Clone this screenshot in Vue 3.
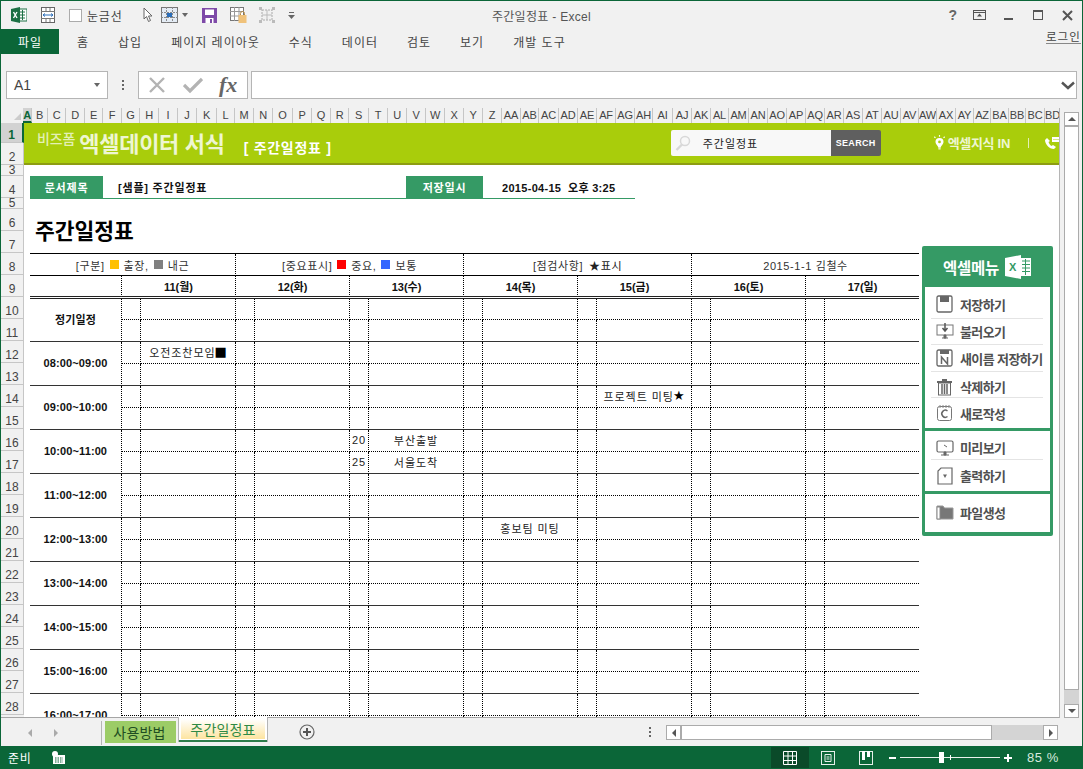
<script setup>
const edges = [23,32,48,66,85,103,122,140,159,178,197,217,235,254,273,293,312,331,349,369,388,407,426,445,464,483,502,521,539,559,578,597,616,635,653,673,692,711,729,749,768,787,806,825,844,863,882,901,919,937,956,974,991,1009,1026,1045,1060]
const letters = 'ABCDEFGHIJKLMNOPQRSTUVWXYZ'.split('')
const names = [...letters, ...letters.map(l => 'A' + l), 'BA', 'BB', 'BC', 'BD']
const cols = names.map((n, i) => ({ n, w: edges[i + 1] - edges[i] }))

const rows = [
  [1, 20], [2, 22], [3, 11], [4, 22], [5, 11], [6, 22], [7, 22], [8, 22], [9, 22], [10, 22],
  ...Array.from({ length: 18 }, (_, i) => [11 + i, 22])
].map(([n, h]) => ({ n, h }))

const tabs = ['홈', '삽입', '페이지 레이아웃', '수식', '데이터', '검토', '보기', '개발 도구']
const days = ['11(월)', '12(화)', '13(수)', '14(목)', '15(금)', '16(토)', '17(일)']
const times = ['정기일정', '08:00~09:00', '09:00~10:00', '10:00~11:00', '11:00~12:00', '12:00~13:00', '13:00~14:00', '14:00~15:00', '15:00~16:00', '16:00~17:00']

// key: block-half-column (column 0..13, even = narrow)
const events = {
  '1-0-1': { t: '오전조찬모임', m: '■' },
  '2-0-9': { t: '프로젝트 미팅', m: '★' },
  '3-0-4': { t: '20' },
  '3-0-5': { t: '부산출발' },
  '3-1-4': { t: '25' },
  '3-1-5': { t: '서울도착' },
  '5-0-7': { t: '홍보팀 미팅' }
}
const cells = Array.from({ length: 14 }, (_, i) => i)

const menu = [
  { pad: 5, items: [
    { t: '저장하기', i: 'save', h: 27, pb: 2 }, { t: '불러오기', i: 'load', h: 26, pb: 1 }, { t: '새이름 저장하기', i: 'saveas', h: 27 },
    { t: '삭제하기', i: 'trash', h: 26, pt: 4 }, { t: '새로작성', i: 'new', h: 30 }] },
  { pad: 5, items: [{ t: '미리보기', i: 'view', h: 24 }, { t: '출력하기', i: 'print', h: 31 }] },
  { pad: 0, items: [{ t: '파일생성', i: 'folder', h: 38, pb: 2 }] }
]
</script>

<template>
  <div class="win">
    <header class="titlebar">
      <div class="qat">
        <svg class="q-xl" width="16" height="16" viewBox="0 0 16 16"><rect x="7" y="2" width="9" height="12" fill="#fff" stroke="#1d7044"/><path d="M9 5h5M9 8h5M9 11h5M11.500 3v10" stroke="#1d7044"/><path d="M0 2l9-2v16l-9-2z" fill="#1d7044"/><path d="M2.500 5l3.500 6M6 5l-3.500 6" stroke="#fff" stroke-width="1.400"/></svg>
        <svg class="q-fz" width="16" height="16" viewBox="0 0 16 16"><rect x="1.500" y=".5" width="13" height="15" fill="#fff" stroke="#666"/><path d="M1 4.500h14M1 11.500h14M6 1v3M10 1v3M6 12v3M10 12v3" stroke="#777"/><path d="M3 8h10M3 8l2-1.500M3 8l2 1.500M13 8l-2-1.500M13 8l-2 1.500" stroke="#2a6ebb"/></svg>
        <span class="check"></span>
        <span class="q-label">눈금선</span>
        <svg class="q-cur" width="10" height="16" viewBox="0 0 10 16"><path d="M1 1v11l2.500-2.500 2 5 2-1-2-4.500H9z" fill="#fff" stroke="#666"/></svg>
        <svg class="q-grid" width="17" height="16" viewBox="0 0 17 16"><rect x=".5" y=".5" width="16" height="15" fill="#e4ecf5" stroke="#777"/><path d="M0 5.500h17M0 10.500h17M5.500 0v16M11.500 0v16" stroke="#8a8a8a" stroke-dasharray="2 1"/><rect x="6" y="6" width="5" height="4" fill="#2a6ebb"/></svg>
        <span class="tri q-tri"></span>
        <svg class="q-save" width="15" height="15" viewBox="0 0 15 15"><path d="M0 0h15v15H0z" fill="#7e4aa8"/><rect x="3" y="1.500" width="9" height="5.500" fill="#fff"/><rect x="3.500" y="10" width="8" height="5" fill="#fff"/><rect x="8" y="11" width="2" height="4" fill="#7e4aa8"/></svg>
        <svg class="q-lock" width="17" height="16" viewBox="0 0 17 16"><rect x=".5" y=".5" width="13" height="13" fill="#fff" stroke="#777"/><path d="M0 4.500h14M0 9h14M4.500 0v14M9 0v14" stroke="#999"/><rect x="8.500" y="8" width="8" height="8" fill="#f0c27a"/><path d="M10.500 8V6.500a2 2 0 0 1 4 0V8" fill="none" stroke="#b58a45"/></svg>
        <svg class="q-grp" width="16" height="16" viewBox="0 0 16 16"><rect x="3" y="3" width="10" height="10" fill="none" stroke="#aaa" stroke-dasharray="2 1"/><path d="M3 8h10M8 3v10" stroke="#bbb"/><path d="M0 0h3v3H0zM13 0h3v3h-3zM0 13h3v3H0zM13 13h3v3h-3z" fill="#bbb"/></svg>
        <svg class="q-more" width="7" height="7" viewBox="0 0 7 7"><path d="M1 .5h5" stroke="#666"/><path d="M0 3h7L3.500 7z" fill="#666"/></svg>
      </div>
      <div class="wintitle">주간일정표 - Excel</div>
      <div class="winbtns">
        <span class="help">?</span>
        <svg class="w-disp" width="13" height="10" viewBox="0 0 13 10"><rect x=".5" y=".5" width="12" height="9" fill="none" stroke="#555"/><path d="M.5 2.500h12" stroke="#555"/><path d="M6.500 3.500l-2.500 3h5z" fill="#555"/></svg>
        <span class="w-min"></span>
        <span class="w-max"></span>
        <svg class="w-close" width="11" height="11" viewBox="0 0 11 11"><path d="M1 1l9 9M10 1l-9 9" stroke="#555" stroke-width="2"/></svg>
      </div>
    </header>

    <nav class="ribbon">
      <div class="filetab">파일</div>
      <div class="tablist">
        <span v-for="t in tabs" :key="t">{{ t }}</span>
      </div>
      <div class="login">로그인</div>
    </nav>

    <div class="fbar">
      <div class="namebox"><span>A1</span><i class="tri"></i></div>
      <div class="dots"><i></i><i></i><i></i></div>
      <div class="fbtns">
        <svg width="18" height="18" viewBox="0 0 18 18"><path d="M2 2l14 14M16 2L2 16" stroke="#b3b3b3" stroke-width="2.400"/></svg>
        <svg width="20" height="18" viewBox="0 0 20 18"><path d="M1 9l6 6L19 3" fill="none" stroke="#b3b3b3" stroke-width="3.200"/></svg>
        <em>fx</em>
      </div>
      <div class="finput">
        <svg width="14" height="9" viewBox="0 0 14 9"><path d="M1 1.500l6 5.500 6-5.500" fill="none" stroke="#555" stroke-width="2.400"/></svg>
      </div>
    </div>

    <main class="grid-area">
      <div class="sheet">
        <div class="colhead">
          <div class="corner"><i></i></div>
          <div v-for="(c, i) in cols" :key="c.n" class="colh" :class="{ sel: i === 0 }" :style="{ width: c.w + 'px' }">{{ c.n }}</div>
        </div>
        <div class="sheetbody">
          <div class="rowhead">
            <div v-for="r in rows" :key="r.n" class="rowh" :class="{ sel: r.n === 1, short: r.h < 20 }" :style="{ height: r.h + 'px' }">{{ r.n }}</div>
          </div>
          <div class="canvas">
            <div class="banner">
              <span class="b-brand">비즈폼</span>
              <span class="b-name">엑셀데이터 서식</span>
              <span class="b-doc">[ 주간일정표 ]</span>
              <div class="b-right">
                <div class="search">
                  <svg width="16" height="16" viewBox="0 0 16 16"><circle cx="10" cy="6" r="4.500" fill="none" stroke="#d8d8d8" stroke-width="1.500"/><path d="M7 9.500L1.500 15" stroke="#d8d8d8" stroke-width="2.400"/></svg>
                  <span>주간일정표</span>
                </div>
                <div class="searchbtn">SEARCH</div>
                <svg class="bulb" width="13" height="15" viewBox="0 0 11 13"><path d="M5.500 2.500a3.500 3.500 0 0 1 3.500 3.500c0 2-2.300 3-2.500 5h-2C4.300 9 2 8 2 6a3.500 3.500 0 0 1 3.500-3.500z" fill="#fff"/><circle cx="5.500" cy="6" r="1.200" fill="#a9cd0b"/><path d="M4.500 12h2" stroke="#fff"/><path d="M5.500 0v1.500M1 1.500l1 1M10 1.500l-1 1" stroke="#fff"/></svg>
                <span class="b-link">엑셀지식 IN</span>
                <span class="b-sep"></span>
                <svg class="phone" width="16" height="13" viewBox="0 0 16 13"><path d="M3 1L1 3c0 4 4 9 9 9l2-2-3-2-1.500 1C6 8 5 6.500 4.500 5L6 4z" fill="#fff"/><rect x="8" y="0" width="8" height="5" fill="#fff"/><path d="M9.500 2.500h5" stroke="#a9cd0b" stroke-dasharray="1 1"/></svg>
              </div>
            </div>

            <div class="doc">
              <div class="doc-l">문서제목</div>
              <div class="doc-v">[샘플] 주간일정표</div>
              <div class="doc-l">저장일시</div>
              <div class="doc-v alt">2015-04-15&nbsp;&nbsp;오후 3:25</div>
            </div>

            <h1 class="title">주간일정표</h1>

            <div class="tbl">
              <div class="h1 s3"><span>[구분]</span><i class="sq y"></i><span>출장,</span><i class="sq g"></i><span>내근</span></div>
              <div class="h1 s4"><span>[중요표시]</span><i class="sq r"></i><span>중요,</span><i class="sq b"></i><span>보통</span></div>
              <div class="h1 s4"><span>[점검사항]</span><span class="star">★표시</span></div>
              <div class="h1 s4 last">2015-1-1 김철수</div>
              <div class="h2 first"></div>
              <div v-for="(d, i) in days" :key="d" class="h2 s2" :class="{ last: i === 6 }">{{ d }}</div>
              <template v-for="(t, b) in times" :key="t">
                <div class="time">{{ t }}</div>
                <template v-for="h in [0, 1]" :key="h">
                  <div v-for="c in cells" :key="c" class="cell" :class="[h ? 'solid' : 'dot', { last: c === 13 }]">
                    <template v-if="events[b + '-' + h + '-' + c]">{{ events[b + '-' + h + '-' + c].t }}<span v-if="events[b + '-' + h + '-' + c].m" class="mark">{{ events[b + '-' + h + '-' + c].m }}</span></template>
                  </div>
                </template>
              </template>
            </div>

            <aside class="menu">
              <div class="menu-head">
                <span>엑셀메뉴</span>
                <svg width="27" height="24" viewBox="0 0 27 24"><path d="M0 3l16-3v24L0 21z" fill="#fff"/><rect x="16" y="3" width="10" height="18" fill="#fff"/><path d="M17 6h8M17 9.500h8M17 13h8M17 16.500h8M20.500 4v16" stroke="#359a65"/><text x="4" y="16" class="xl-x">X</text></svg>
              </div>
              <div v-for="(p, pi) in menu" :key="pi" class="panel" :style="{ paddingTop: p.pad + 'px' }">
                <div v-for="it in p.items" :key="it.t" class="mi" :style="{ height: it.h + 'px', paddingTop: (it.pt || 0) + 'px', paddingBottom: (it.pb || 0) + 'px' }">
                  <svg width="18" height="18" viewBox="0 0 18 18" class="mi-i">
                    <g v-if="it.i === 'save'"><rect x="1" y="1" width="15" height="16" rx="1.500" fill="#fff" stroke="#666" stroke-width="1.300"/><rect x="4" y="1" width="9" height="6" fill="#666"/></g>
                    <g v-else-if="it.i === 'load'"><rect x="1" y="3" width="16" height="10" fill="#fff" stroke="#777"/><path d="M9 1v7M6.500 6L9 9l2.500-3" fill="none" stroke="#555" stroke-width="1.500"/><path d="M6 16h6M8 13h2v3H8z" fill="#666" stroke="#666"/></g>
                    <g v-else-if="it.i === 'saveas'"><rect x="1" y="1" width="15" height="16" rx="1.500" fill="#fff" stroke="#666" stroke-width="1.300"/><rect x="4" y="1" width="9" height="4" fill="#666"/><path d="M5.500 15V8l6 7V8" fill="none" stroke="#666" stroke-width="1.500"/></g>
                    <g v-else-if="it.i === 'trash'"><path d="M1 4h15M6 2h5" stroke="#666" stroke-width="2"/><rect x="2.500" y="5" width="12" height="12" fill="#fff" stroke="#666"/><path d="M6 6v10M8.500 6v10M11 6v10" stroke="#666" stroke-width="1.500"/></g>
                    <g v-else-if="it.i === 'new'"><rect x="1.500" y="2.500" width="14" height="14" rx="2" fill="#fff" stroke="#777"/><path d="M4 1v3M7 1v3M10 1v3M13 1v3" stroke="#888"/><path d="M11.500 7a3.500 3.500 0 1 0 0 5.500" fill="none" stroke="#666" stroke-width="1.500"/></g>
                    <g v-else-if="it.i === 'view'"><rect x="1" y="2" width="16" height="11" rx="1.500" fill="#fff" stroke="#666" stroke-width="1.200"/><path d="M8 6l3 2" stroke="#666"/><path d="M5 16h8M8 13h2v3H8z" fill="#666" stroke="#666"/></g>
                    <g v-else-if="it.i === 'print'"><path d="M5 1h11v16H2V4z" fill="#fff" stroke="#666" stroke-width="1.200"/><path d="M7 7.500h4L9 11z" fill="#666"/></g>
                    <g v-else><path d="M1 16V3h6l1.500 2H17v11z" fill="#777" stroke="#999"/><rect x="1" y="4" width="3" height="12" fill="#fff" stroke="#888"/></g>
                  </svg>
                  <span>{{ it.t }}</span>
                </div>
              </div>
            </aside>
          </div>
        </div>
      </div>
      <div class="vscroll">
        <div class="sb-btn"><i class="up"></i></div>
        <div class="sb-thumb"></div>
        <div class="sb-track"></div>
        <div class="sb-btn"><i class="down"></i></div>
      </div>
    </main>

    <div class="tabbar">
      <div class="nav"><i class="al"></i><i class="ar"></i></div>
      <div class="tab plain">사용방법</div>
      <div class="tab active"><span>주간일정표</span></div>
      <svg class="add" width="16" height="16" viewBox="0 0 16 16"><circle cx="8" cy="8" r="7" fill="none" stroke="#666" stroke-width="1.200"/><path d="M8 4v8M4 8h8" stroke="#555" stroke-width="2"/></svg>
      <div class="dots h"><i></i><i></i><i></i></div>
      <div class="hscroll">
        <div class="hb"><i class="hl"></i></div>
        <div class="hthumb"></div>
        <div class="htrack"></div>
        <div class="hb"><i class="hr"></i></div>
      </div>
    </div>

    <footer class="status">
      <span class="ready">준비</span>
      <svg class="macro" width="13" height="13" viewBox="0 0 13 13"><rect x="1" y="4" width="12" height="9" fill="#fff"/><path d="M3 7h8M3 9h8M3 11h8" stroke="#0b6638" stroke-dasharray="1.500 1"/><circle cx="3" cy="3" r="3" fill="#fff"/></svg>
      <div class="views">
        <div class="v-btn on"><svg width="14" height="14" viewBox="0 0 14 14"><path d="M.5.5h13v13H.5zM.5 5h13M.5 9.500h13M5 .5v13M9.500.5v13" fill="none" stroke="#fff"/></svg></div>
        <div class="v-btn"><svg width="14" height="14" viewBox="0 0 14 14"><rect x=".5" y=".5" width="13" height="13" fill="none" stroke="#e6f0ea"/><path d="M4 3.500h6v7H4zM5.500 6h3M5.500 8h3" fill="none" stroke="#e6f0ea"/></svg></div>
        <div class="v-btn"><svg width="14" height="14" viewBox="0 0 14 14"><rect x=".5" y=".5" width="13" height="13" fill="none" stroke="#e6f0ea"/><path d="M3 0h3v9H3zM8 0h3v6H8z" fill="#fff"/></svg></div>
      </div>
      <div class="zoomctl">
        <span class="z-minus"></span>
        <div class="z-track"><i class="z-tick"></i><i class="z-thumb"></i></div>
        <span class="z-plus"></span>
        <span class="z-val">85 %</span>
      </div>
    </footer>
  </div>
</template>

<style>
html, body { margin: 0; padding: 0; overflow: hidden; }
</style>

<style scoped>
* { box-sizing: border-box; }
.win {
  width: 1083px; height: 769px; background: #f1f1f1; display: flex; flex-direction: column;
  border: 1px solid #0b6638; border-bottom: 0; overflow: hidden;
  font-family: "Liberation Sans", "Noto Sans CJK KR", sans-serif; color: #444;
}
.titlebar { height: 28px; display: grid; grid-template-columns: 1fr auto 1fr; align-items: center; flex: none; }
.qat { display: flex; align-items: center; padding-left: 10px; }
.q-fz { margin-left: 13px; }
.check { width: 13px; height: 13px; background: #fff; border: 1px solid #ababab; margin-left: 13px; }
.q-label { font-size: 12px; margin-left: 5px; letter-spacing: .8px; white-space: nowrap; }
.q-cur { margin-left: 20px; }
.q-grid { margin-left: 8px; }
.tri { width: 0; height: 0; border: 3px solid transparent; border-top: 4px solid #666; border-bottom: 0; display: block; }
.q-tri { margin-left: 4px; }
.q-save { margin-left: 14px; }
.q-lock { margin-left: 13px; }
.q-grp { margin-left: 12px; }
.q-more { margin-left: 13px; }
.wintitle { font-size: 12px; letter-spacing: .3px; white-space: nowrap; color: #555; }
.winbtns { display: flex; align-items: center; justify-content: flex-end; height: 100%; padding-right: 9px; }
.help { font-weight: 700; font-size: 14px; color: #666; margin-right: 16px; }
.w-min { width: 9px; height: 2px; background: #555; margin: 7px 20px 0 18px; }
.w-max { width: 10px; height: 10px; border: 1px solid #555; border-top-width: 2px; margin-right: 19px; }
.ribbon { height: 25px; display: flex; align-items: center; flex: none; position: relative; }
.filetab { width: 59px; height: 100%; background: #0b6638; color: #fff; font-size: 12px; letter-spacing: 1px; display: flex; align-items: center; justify-content: center; margin-left: -1px; padding-left: 1px; }
.tablist { display: flex; gap: 29px; padding-left: 18px; font-size: 12px; letter-spacing: 1px; white-space: nowrap; color: #444; }
.login { position: absolute; left: 1045px; top: 2px; font-size: 11.500px; letter-spacing: 1px; white-space: nowrap; border-bottom: 1px solid #888; line-height: 12px; height: 13px; color: #444; }
.fbar { height: 28px; margin-top: 17px; display: flex; align-items: stretch; padding-left: 5px; flex: none; }
.namebox { width: 102px; background: #fff; border: 1px solid #b5b5b5; display: flex; align-items: center; justify-content: space-between; padding: 0 7px; font-size: 14px; color: #444; }
.namebox .tri { border-width: 4px 3.500px 0; }
.dots { display: flex; flex-direction: column; gap: 2px; justify-content: center; width: 30px; align-items: center; }
.dots i { width: 2px; height: 2px; background: #666; display: block; }
.fbtns { width: 110px; background: #fff; border: 1px solid #b5b5b5; display: flex; align-items: center; gap: 17px; padding-left: 9px; }
.fbtns em { font-family: "Liberation Serif", serif; font-weight: 700; font-size: 22px; color: #666; margin-left: -1px; }
.finput { margin-left: 3px; width: 826px; background: #fff; border: 1px solid #b5b5b5; display: flex; align-items: center; justify-content: flex-end; padding-right: 1px; }
.grid-area { margin-top: 9px; height: 610px; display: flex; flex: none; }
.sheet { width: 1059px; height: 610px; display: flex; flex-direction: column; border-right: 1px solid #b5b5b5; border-bottom: 1px solid #a5a5a5; overflow: hidden; flex: none; }
.colhead { display: flex; height: 15px; flex: none; }
.corner { width: 22px; flex: none; position: relative; }
.corner i { position: absolute; right: 2px; bottom: 3px; border-style: solid; border-width: 0 0 7px 7px; border-color: transparent transparent #ccc transparent; }
.colh { flex: none; font-size: 11px; text-align: center; line-height: 15px; overflow: hidden; white-space: nowrap; border-right: 1px solid #c6c6c6; color: #444; letter-spacing: -.2px; }
.colh.sel { background: #d2d2d2; color: #0b6638; font-weight: 700; border-bottom: 2px solid #0b6638; }
.sheetbody { display: flex; flex: 1; min-height: 0; }
.rowhead { width: 23px; flex: none; }
.rowh { font-size: 12px; text-align: center; border-bottom: 1px solid #c6c6c6; border-right: 1px solid #c6c6c6; display: flex; align-items: flex-end; justify-content: center; line-height: 14px; overflow: hidden; color: #444; }
.rowh.short { align-items: center; line-height: 10px; }
.rowh.sel { background: #d2d2d2; color: #0b6638; font-weight: 700; border-right: 2px solid #0b6638; }
.canvas { flex: 1; background: #fff; position: relative; overflow: hidden; font-size: 11px; color: #222; }
.banner { height: 42px; background: #a9cd0b; border-bottom: 2px solid #8d9c12; display: flex; align-items: center; padding-left: 13px; white-space: nowrap; }
.b-brand { font-size: 14px; color: #e3f0b5; margin-top: -9px; font-weight: 500; line-height: 20px; letter-spacing: -.1px; }
.b-name { font-size: 22px; font-weight: 700; color: #eef6d2; margin-left: 4px; letter-spacing: -.3px; margin-top: -3px; }
.b-doc { font-size: 14px; font-weight: 700; color: #fff; margin-left: 19px; margin-top: 8px; letter-spacing: .7px; }
.b-right { margin-left: auto; display: flex; align-items: center; margin-right: -1px; }
.search { width: 160px; height: 26px; background: #f8f8f8; border-radius: 2px 0 0 2px; display: flex; align-items: center; padding-left: 4px; font-size: 11px; color: #222; letter-spacing: 1px; margin-top: -1px; }
.search span { margin-left: 12px; margin-top: 1px; }
.searchbtn { width: 50px; height: 26px; background: #5f5f5f; color: #fff; font-size: 9px; font-weight: 700; display: flex; align-items: center; justify-content: center; margin-top: -1px; border-radius: 0 2px 2px 0; letter-spacing: .3px; }
.bulb { margin-left: 52px; margin-top: -2px; }
.b-link { color: #eef6d2; font-size: 13px; font-weight: 700; margin-left: 2px; letter-spacing: -.3px; margin-top: -1px; }
.b-sep { width: 1px; height: 10px; background: #e3f0b5; margin-left: 18px; }
.phone { margin-left: 15px; }
.doc { margin: 11px 0 0 6px; width: 605px; height: 23px; display: grid; grid-template-columns: 73px 303px 77px 1fr; border-bottom: 1px solid #359a65; }
.doc-l { background: #359a65; color: #fff; font-weight: 700; display: flex; align-items: center; justify-content: center; letter-spacing: .8px; }
.doc-v { font-weight: 700; padding-left: 15px; display: flex; align-items: center; color: #111; letter-spacing: .8px; white-space: nowrap; }
.doc-v.alt { padding-left: 19px; letter-spacing: .3px; }
.title { margin: 0; padding: 21px 0 0 11px; height: 54px; font-size: 21.500px; line-height: 24px; font-weight: 700; color: #000; }
.tbl { margin-left: 6px; width: 889px; border-top: 1px solid #000; display: grid; grid-template-columns: 92px repeat(6, 19px 95px) 19px 94px; grid-template-rows: 22px 23px 21px; grid-auto-rows: 22px; }
.h1 { border-bottom: 1px solid #000; border-right: 1px dotted #000; display: flex; align-items: center; justify-content: center; letter-spacing: .6px; color: #333; white-space: nowrap; }
.h1 .sq { width: 9px; height: 9px; display: block; margin: 0 5px; }
.sq.y { background: #ffc000; } .sq.g { background: #808080; } .sq.r { background: #f00; } .sq.b { background: #36f; }
.star { margin-left: 6px; color: #222; }
.s2 { grid-column: span 2; } .s3 { grid-column: span 3; } .s4 { grid-column: span 4; }
.h2 { border-bottom: 3px double #222; border-right: 1px dotted #000; font-weight: 700; display: flex; align-items: center; justify-content: center; color: #111; padding-bottom: 1px; }
.time { grid-row: span 2; border-bottom: 1px solid #333; font-weight: 700; color: #111; display: flex; align-items: center; justify-content: center; white-space: nowrap; border-right: 1px dotted #000; letter-spacing: .1px; padding-bottom: 2px; }
.cell { display: flex; align-items: center; justify-content: center; white-space: nowrap; letter-spacing: .95px; color: #222; border-right: 1px dotted #000; padding-bottom: 2px; overflow: visible; }
.mark { font-family: "DejaVu Sans", sans-serif; font-size: 13px; line-height: 14px; color: #000; letter-spacing: 0; margin-left: -1px; }
.cell.dot { border-bottom: 1px dotted #000; }
.cell.solid { border-bottom: 1px solid #333; }
.last { border-right: 0; }
.menu { position: absolute; left: 898px; top: 123px; width: 131px; height: 290px; background: #359a65; border-radius: 2px; padding: 0 3px 3px; display: flex; flex-direction: column; gap: 3px; }
.menu-head { height: 41px; margin-bottom: -3px; display: flex; align-items: center; justify-content: center; gap: 6px; color: #fff; font-size: 15.500px; font-weight: 700; letter-spacing: -.3px; }
.xl-x { font-family: "Liberation Sans", sans-serif; font-size: 11px; font-weight: 700; fill: #359a65; }
.panel { background: #fff; }
.panel:nth-of-type(2) { height: 141px; }
.panel:nth-of-type(3) { height: 60px; }
.panel:nth-of-type(4) { height: 38px; }
.mi { margin: 0 7px 0 6px; border-bottom: 1px solid #e4e4e4; display: flex; align-items: center; padding-left: 5px; gap: 6px; font-size: 13px; font-weight: 700; color: #505050; letter-spacing: -.6px; white-space: nowrap; }
.mi:last-child { border-bottom: 0; }
.mi-i { flex: none; }
.vscroll { margin-left: 4px; margin-top: 4px; width: 15px; height: 606px; display: flex; flex-direction: column; flex: none; }
.sb-btn { height: 14px; background: #fff; border: 1px solid #ababab; display: flex; align-items: center; justify-content: center; flex: none; }
.sb-btn i { width: 0; height: 0; border-left: 4px solid transparent; border-right: 4px solid transparent; display: block; }
.sb-btn .up { border-bottom: 4px solid #555; }
.sb-btn .down { border-top: 4px solid #555; }
.sb-thumb { height: 564px; background: #fff; border: 1px solid #ababab; flex: none; }
.sb-track { flex: 1; background: #d4d4d4; }
.tabbar { height: 28px; display: flex; align-items: flex-start; flex: none; position: relative; }
.nav { width: 101px; height: 24px; margin-top: 3px; display: flex; gap: 22px; align-items: center; padding-left: 27px; border-right: 1px solid #b5b5b5; flex: none; }
.nav i { width: 0; height: 0; border-top: 4px solid transparent; border-bottom: 4px solid transparent; display: block; }
.nav .al { border-right: 4px solid #aaa; }
.nav .ar { border-left: 4px solid #aaa; }
.tab { font-size: 14px; letter-spacing: .2px; white-space: nowrap; display: flex; align-items: center; justify-content: center; flex: none; }
.tab.plain { width: 71px; height: 22px; margin: 3px 0 0 3px; background: #9ccc66; color: #1f4d22; padding-right: 2px; }
.tab.active { width: 88px; height: 25px; margin: -1px 0 0 3px; background: #fff; border-bottom: 2px solid #2e7d4b; padding: 2px 2px 1px; z-index: 1; box-shadow: 1px 0 0 #b5b5b5, -1px 0 0 #b5b5b5; }
.tab.active span { width: 100%; height: 100%; display: flex; align-items: center; justify-content: center; background: linear-gradient(#fff, #fde49f); color: #2f8a45; }
.add { margin: 6px 0 0 32px; flex: none; }
.dots.h { width: 4px; margin: 5px 0 0 333px; height: 18px; flex: none; }
.hscroll { display: flex; margin: 7px 0 0 14px; height: 15px; flex: none; }
.hb { width: 15px; height: 15px; background: #fff; border: 1px solid #ababab; display: flex; align-items: center; justify-content: center; flex: none; }
.hb i { width: 0; height: 0; border-top: 4px solid transparent; border-bottom: 4px solid transparent; display: block; }
.hl { border-right: 4px solid #555; }
.hr { border-left: 4px solid #555; }
.hthumb { width: 311px; background: #fff; border: 1px solid #ababab; flex: none; }
.htrack { width: 51px; background: #d4d4d4; flex: none; }
.status { height: 23px; background: #0b6638; display: flex; align-items: center; color: #fff; font-size: 12px; flex: none; margin: 0 -1px; padding-left: 8px; }
.ready { letter-spacing: .8px; width: 44px; }
.views { display: flex; height: 21px; margin-left: 706px; flex: none; }
.v-btn { width: 38px; height: 21px; display: flex; align-items: center; justify-content: center; }
.v-btn.on { background: #0a4a29; }
.zoomctl { display: flex; align-items: center; }
.z-minus { width: 7px; height: 2px; background: #fff; margin: 0 4px 0 4px; }
.z-track { width: 100px; height: 1px; background: #e9f2ec; position: relative; }
.z-tick { position: absolute; left: 50px; top: -2px; width: 1px; height: 5px; background: #fff; }
.z-thumb { position: absolute; left: 39px; top: -5px; width: 5px; height: 11px; background: #fff; }
.z-plus { width: 8px; height: 8px; margin-left: 4px; background: linear-gradient(#fff, #fff) center / 8px 2px no-repeat, linear-gradient(#fff, #fff) center / 2px 8px no-repeat; }
.z-val { margin-left: 15px; font-size: 13px; letter-spacing: .6px; color: #d8eadf; white-space: nowrap; }
.macro { margin-left: 0; flex: none; }
</style>
